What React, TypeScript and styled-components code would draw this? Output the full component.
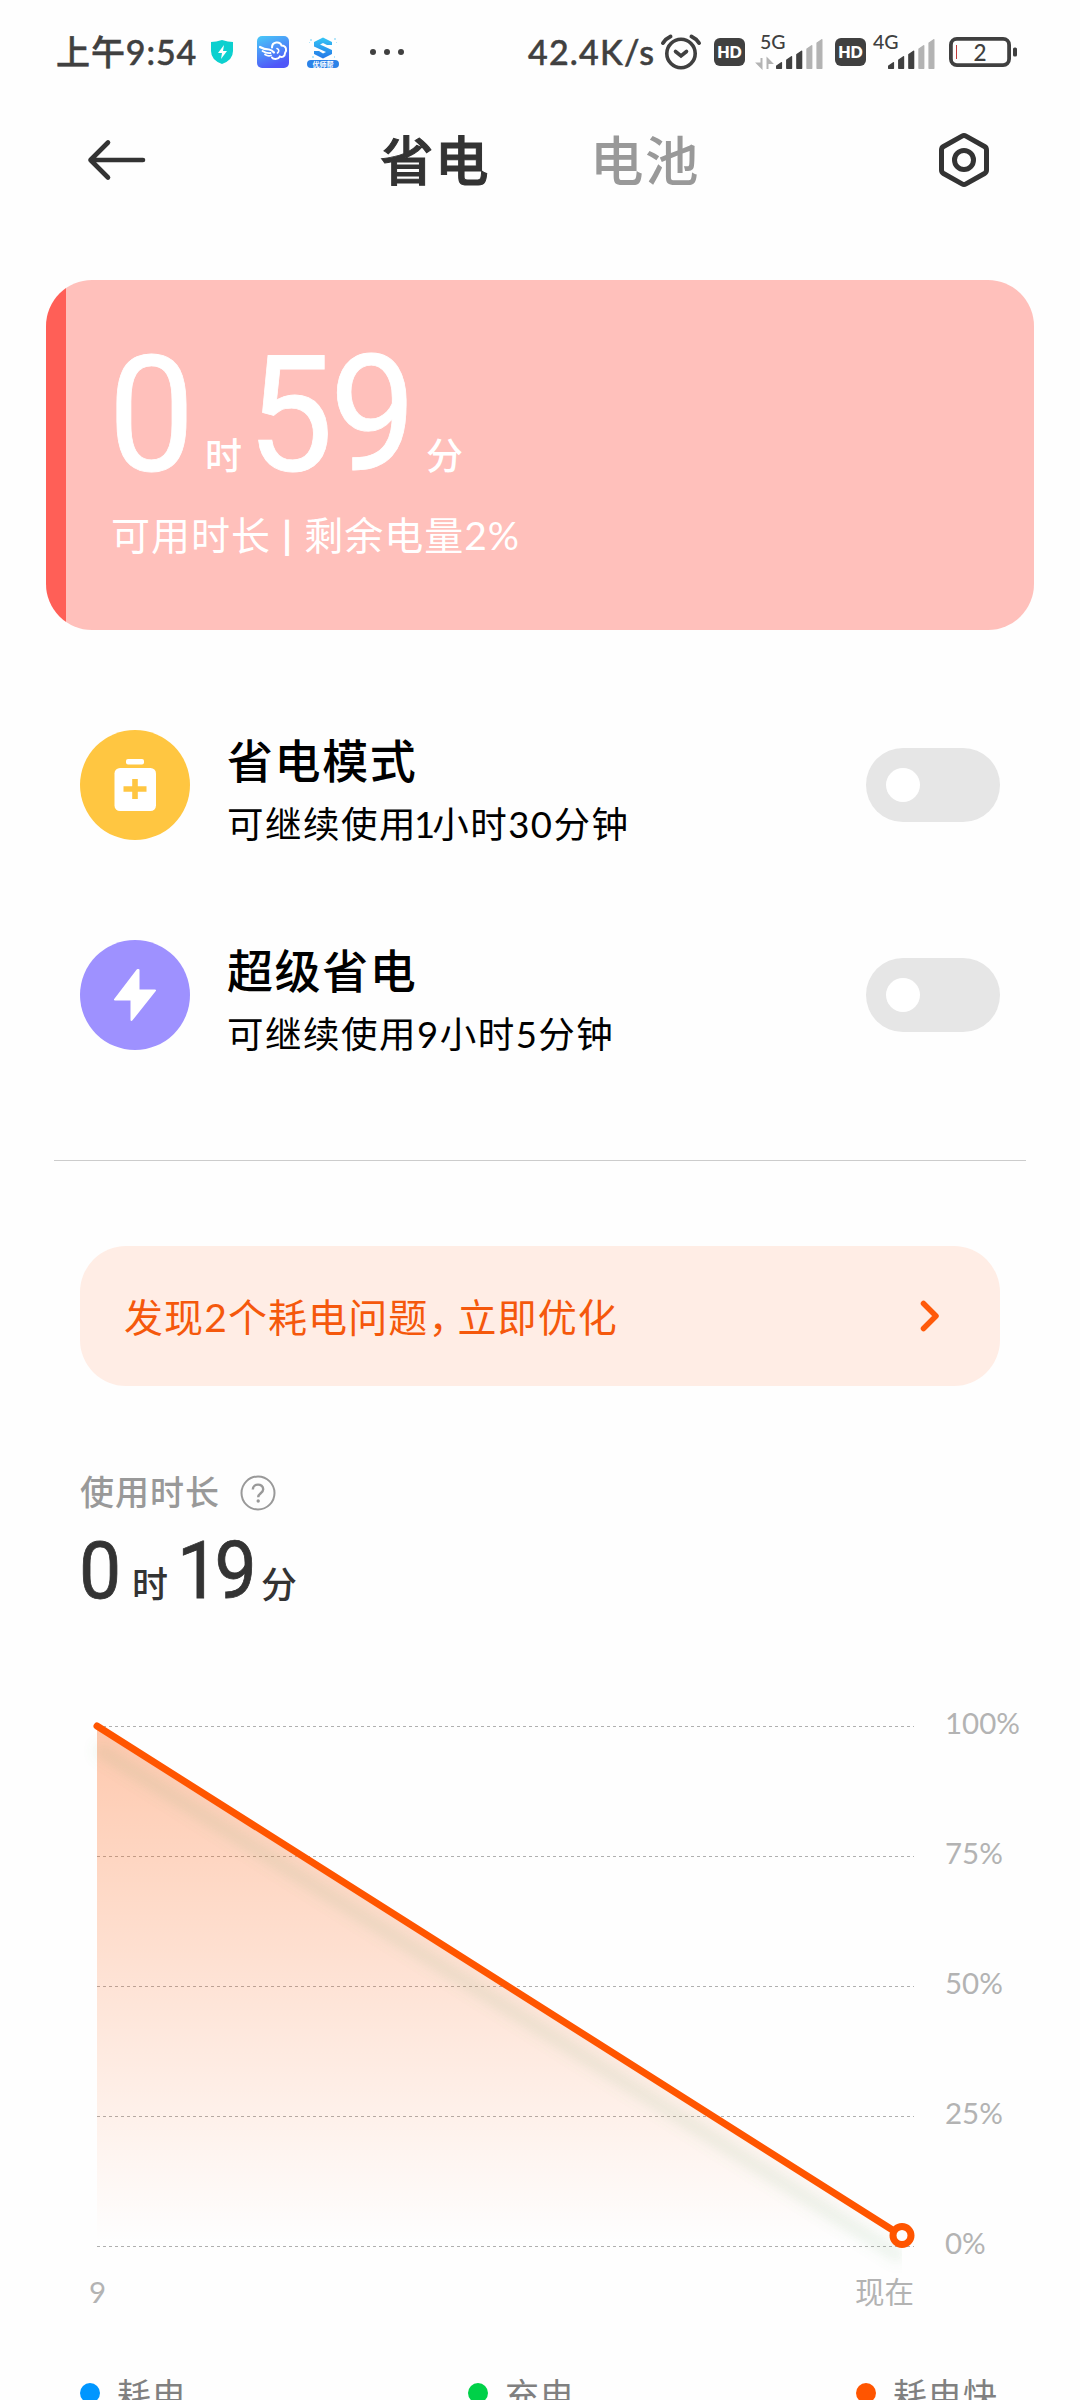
import React from "react";
import styled, { createGlobalStyle } from "styled-components";

const GlobalStyle = createGlobalStyle`
  html, body { margin: 0; padding: 0; background: #fefefe; }
  body { font-family: Lato, "Noto Sans CJK SC", sans-serif; color: #333; }
  svg { display: block; flex: none; overflow: visible; }
`;

const Screen = styled.main`
  width: 1080px;
  height: 2400px;
  overflow: hidden;
  display: flex;
  flex-direction: column;
  & > * { flex: none; box-sizing: border-box; }
`;

const StatusBar = styled.header`
  height: 104px;
  padding: 0 63px 0 56px;
  display: flex;
  align-items: center;
  justify-content: space-between;
  color: #404040;
`;

const StatusGroup = styled.div`
  display: flex;
  align-items: center;
`;

const StatusText = styled.span<{ $width: number; $spacing?: number }>`
  width: ${(p) => p.$width}px;
  font-size: 34px;
  line-height: 50px;
  font-weight: 500;
  letter-spacing: ${(p) => p.$spacing ?? 0}px;
  -webkit-text-stroke: 0.5px #404040;
  white-space: nowrap;
`;

const Gap = styled.i<{ $w: number }>`
  width: ${(p) => p.$w}px;
  flex: none;
`;

const NavBar = styled.nav`
  height: 176px;
  padding: 18px 91px 82px 88px;
  display: flex;
  align-items: center;
  justify-content: space-between;
`;

const Tabs = styled.div`
  display: flex;
  gap: 100px;
  margin-right: 5px;
`;

const Tab = styled.span<{ $active?: boolean }>`
  font-size: 53.5px;
  line-height: 76px;
  font-weight: 500;
  letter-spacing: 1.5px;
  color: ${(p) => (p.$active ? "#333" : "#999")};
  -webkit-text-stroke: ${(p) => (p.$active ? "1px #333" : "0")};
`;

const BatteryCard = styled.section`
  height: 350px;
  margin: 0 46px;
  padding: 58px 0 0 65px;
  border-radius: 46px;
  color: #fff;
  background: linear-gradient(to right, #ff5f57 20px, #ffc0bb 20px);
`;

const BigTime = styled.div`
  display: flex;
  align-items: baseline;
  height: 169px;
  line-height: 154px;
`;

const Digits = styled.span<{ $size: number; $width: number; $spacing?: number; $shift?: number }>`
  width: ${(p) => p.$width}px;
  font-family: Roboto, sans-serif;
  font-size: ${(p) => p.$size}px;
  letter-spacing: ${(p) => p.$spacing ?? 0}px;
  text-indent: ${(p) => p.$shift ?? 0}px;
  transform: scaleX(0.95);
  transform-origin: left;
  -webkit-text-stroke: 0.8px currentColor;
  white-space: nowrap;
`;

const Unit = styled.span<{ $size: number; $width: number }>`
  width: ${(p) => p.$width}px;
  font-size: ${(p) => p.$size}px;
  font-weight: 500;
`;

const CardNote = styled.div`
  font-size: 39px;
  line-height: 56px;
  letter-spacing: 1px;
  white-space: pre;
`;

const Bar = styled.span`
  font-weight: 700;
`;

const ModeList = styled.section`
  display: flex;
  flex-direction: column;
  gap: 100px;
  padding: 100px 80px 0;
  height: 530px;
`;

const ModeRow = styled.div`
  display: flex;
  align-items: center;
  height: 110px;
`;

const ModeIcon = styled.div<{ $color: string }>`
  width: 110px;
  height: 110px;
  border-radius: 50%;
  background: ${(p) => p.$color};
`;

const ModeText = styled.div`
  flex: 1;
  padding: 10px 0 0 37px;
  color: #000;
  white-space: nowrap;
`;

const ModeTitle = styled.div`
  font-size: 46px;
  line-height: 64px;
  font-weight: 500;
  letter-spacing: 1.6px;
`;

const ModeNote = styled.div`
  font-size: 36.5px;
  line-height: 54px;
  letter-spacing: 1.5px;
  margin-top: 4px;
`;

const Narrow = styled.span<{ $by: number; $lead?: number }>`
  letter-spacing: ${(p) => -p.$by}px;
  margin-left: ${(p) => -(p.$lead ?? 0)}px;
`;

const Toggle = styled.div`
  box-sizing: border-box;
  width: 134px;
  height: 74px;
  padding: 20px;
  border-radius: 37px;
  background: #e6e6e6;
`;

const Knob = styled.div`
  width: 34px;
  height: 34px;
  border-radius: 50%;
  background: #fff;
`;

const Divider = styled.hr`
  width: 972px;
  height: 1px;
  margin: 0 54px 85px;
  border: 0;
  background: #ccc;
`;

const Notice = styled.section`
  height: 140px;
  margin: 0 80px;
  padding: 0 60px 0 44px;
  border-radius: 46px;
  display: flex;
  align-items: center;
  justify-content: space-between;
  background: #ffede5;
  color: #f5580c;
  font-size: 39px;
  letter-spacing: 1.1px;
`;

const NoticeText = styled.span`
  padding-bottom: 3px;
`;

const Usage = styled.section`
  padding: 81px 0 0 80px;
  height: 259px;
`;

const UsageLabel = styled.div`
  display: flex;
  align-items: center;
  gap: 20px;
  height: 52px;
  font-size: 34px;
  line-height: 48px;
  letter-spacing: 1px;
  color: #999;
`;

const UsageName = styled.span`
  font-weight: 500;
  padding-bottom: 3px;
`;

const UsageTime = styled.div`
  display: flex;
  align-items: baseline;
  height: 90px;
  line-height: 104px;
`;

const ChartArea = styled.section`
  display: flex;
  height: 610px;
  padding-left: 97px;
`;

const AxisLabels = styled.div`
  display: flex;
  flex-direction: column;
  padding: 58px 0 0 30px;
`;

const AxisLabel = styled.span`
  flex: none;
  height: 130px;
  line-height: 40px;
  font-size: 29.5px;
  color: #b3b3b3;
`;

const TimeAxis = styled.div`
  display: flex;
  justify-content: space-between;
  padding: 16px 166px 0 89px;
  height: 112px;
  line-height: 42px;
  font-size: 29.5px;
  color: #b3b3b3;
`;

const Legend = styled.footer`
  display: grid;
  grid-template-columns: 388px 388px auto;
  margin-left: 80px;
`;

const LegendItem = styled.div<{ $color: string }>`
  display: flex;
  align-items: center;
  gap: 17px;
  height: 52px;
  font-size: 34px;
  letter-spacing: 1px;
  color: #808080;
  white-space: nowrap;
  &::before {
    content: "";
    width: 20px;
    height: 20px;
    border-radius: 50%;
    background: ${(p) => p.$color};
  }
`;

const ShieldIcon = () => (
  <svg width="24" height="26" viewBox="0 0 24 26">
    <path d="M12 1 Q6 3 1 3 V12 Q1 21 12 25 Q23 21 23 12 V3 Q18 3 12 1Z" fill="#0cd0cf" />
    <path d="M14 6 8 14h4l-1 6 6-8h-4z" fill="#fff" />
  </svg>
);

const CloudIcon = () => (
  <svg width="32" height="32" viewBox="0 0 32 32">
    <defs>
      <linearGradient id="cloud" x1="0" y1="0" x2=".4" y2="1">
        <stop stopColor="#48cbf8" />
        <stop offset="1" stopColor="#5057f8" />
      </linearGradient>
    </defs>
    <rect width="32" height="32" rx="5" fill="url(#cloud)" />
    <g fill="none" stroke="#fff" strokeLinecap="round">
      <path d="M3 11q4 2.500 9 2.500 3 .5 5 3" strokeWidth="2.200" />
      <path d="M5.500 15q4 2.500 8 2M8 18.500q3 2 6 1" strokeWidth="1.800" />
      <path d="M15 11.500c0-6 8-6.500 9.500-2 5 0 5.500 5 3.500 7.500 0 4-3.500 4.500-5 3.500-2 3.500-7 3-8 1" strokeWidth="2" />
      <path d="M20 12.500c2 .5 2.500 3 .5 4.500" strokeWidth="1.600" />
    </g>
  </svg>
);

const SBadgeIcon = () => (
  <svg width="32" height="32" viewBox="0 0 32 32">
    <defs>
      <linearGradient id="sbadge" x1="0" y1="0" x2="0" y2="1">
        <stop stopColor="#35c6f5" />
        <stop offset="1" stopColor="#2477e8" />
      </linearGradient>
    </defs>
    <path d="M16 1.500 25 6V9H20L16 7 13 8.500 25 14V18L16 22.500 7 18V15H12L16 17.500 19 16 7 10.500V6Z" fill="url(#sbadge)" />
    <path d="M3 3h2v2H3zM27 2h2v2h-2zM5 20h2v2H5zM27 20h1v2h-1zM2 6h1v1H2zM29 6h1v1h-1z" fill="#b5e6fa" />
    <rect x="0" y="24" width="32" height="8" rx="4" fill="#2b82e8" />
    <text x="16" y="30.500" fontSize="7" fontWeight="700" textAnchor="middle" fill="#fff">优师帮</text>
  </svg>
);

const DotsIcon = () => (
  <svg width="34" height="6" viewBox="0 0 34 6" fill="#404040">
    <circle cx="3" cy="3" r="3" />
    <circle cx="17" cy="3" r="3" />
    <circle cx="31" cy="3" r="3" />
  </svg>
);

const AlarmIcon = () => (
  <svg width="40" height="36" viewBox="0 0 40 36" fill="none" stroke="#404040" strokeLinecap="round">
    <circle cx="20" cy="19.500" r="14.200" strokeWidth="3.600" />
    <path d="M14.500 17.500l5.500 4.500 5.500-4.500" strokeWidth="3.600" />
    <path d="M2 9Q5 4.500 9.500 2.500M38 9Q35 4.500 30.500 2.500" strokeWidth="4" />
  </svg>
);

const HdIcon = () => (
  <svg width="31" height="28" viewBox="0 0 31 28">
    <rect width="31" height="28" rx="6" fill="#404040" />
    <text x="15.500" y="20" fontSize="16" fontWeight="800" textAnchor="middle" fill="#fff">HD</text>
  </svg>
);

const BARS = [7, 13, 18.5, 24, 30];

const SignalIcon = ({ label, shift, arrows }: { label: string; shift: number; arrows?: boolean }) => (
  <svg width={shift + 49} height="34" viewBox={`0 0 ${shift + 49} 34`}>
    <text x={arrows ? 3 : 0} y="14" fontSize="19.500" fontWeight="500" fill="#404040">{label}</text>
    {arrows && (
      <path d="M4.500 33V23M10.500 23v11M.500 28.500h4v4zM14.500 28h-4v-4z" stroke="#b3b3b3" strokeWidth="2" fill="#b3b3b3" />
    )}
    {BARS.map((h, i) => {
      const x = shift + i * 10.1;
      const ink = i < 3 ? "#404040" : "#b3b3b3";
      return (
        <path
          key={h}
          d={`M${x + 0.7} 33.3V${38 - h}L${x + 5.4} ${34.7 - h}V33.3Z`}
          fill={ink}
          stroke={ink}
          strokeWidth="1.400"
          strokeLinejoin="round"
        />
      );
    })}
  </svg>
);

const BatteryIcon = () => (
  <svg width="68" height="30" viewBox="0 0 68 30">
    <rect x="1.900" y="1.900" width="58.200" height="26.200" rx="6" fill="none" stroke="#404040" strokeWidth="3.800" />
    <rect x="64" y="10.500" width="4" height="9" rx="1.600" fill="#404040" />
    <path d="M7.500 8v14" stroke="#c23a3a" strokeWidth="1" />
    <text x="31" y="23.500" fontSize="22.500" fontWeight="500" textAnchor="middle" fill="#404040">2</text>
  </svg>
);

const BackIcon = () => (
  <svg width="58" height="42" viewBox="0 0 58 42" fill="none" stroke="#333" strokeWidth="4.600" strokeLinecap="round" strokeLinejoin="round">
    <path d="M20 3.500 2.500 21 20 38.500M2.500 21H55" />
  </svg>
);

const SettingsIcon = () => (
  <svg width="50" height="54" viewBox="0 0 50 54" fill="none" stroke="#333" strokeWidth="5" strokeLinejoin="round">
    <path d="M23 3.100Q25 2 27 3.100L45.500 13.500Q47.500 14.700 47.500 17V37Q47.500 39.300 45.500 40.500L27 50.900Q25 52 23 50.900L4.500 40.500Q2.500 39.300 2.500 37V17Q2.500 14.700 4.500 13.500Z" />
    <circle cx="25" cy="27" r="9.500" />
  </svg>
);

const SaverGlyph = () => (
  <svg width="110" height="110" viewBox="0 0 110 110">
    <rect x="46" y="29" width="18" height="5.500" rx="2" fill="#fff" />
    <rect x="34.500" y="38" width="41.500" height="43" rx="5.500" fill="#fff" />
    <path d="M55 49v20M43.500 59h23" stroke="#ffc641" strokeWidth="5.600" />
  </svg>
);

const BoltGlyph = () => (
  <svg width="110" height="110" viewBox="0 0 110 110">
    <path d="M57.500 30 35 59.500H51.500V80L75 50.500H58.500V30Z" fill="#fff" stroke="#fff" strokeWidth="2" strokeLinejoin="round" />
  </svg>
);

const ChevronIcon = () => (
  <svg width="20" height="32" viewBox="0 0 20 32" fill="none" stroke="#ff5a0a" strokeWidth="5.500" strokeLinecap="round" strokeLinejoin="round">
    <path d="M3.500 3.500 16 16 3.500 28.500" />
  </svg>
);

const HelpIcon = () => (
  <svg width="36" height="36" viewBox="0 0 36 36" fill="none" stroke="#999" strokeWidth="2">
    <circle cx="18" cy="18" r="16.500" />
    <path d="M12.800 14.500c0-6.600 10.400-6.400 10.400-.3 0 4-5 4-5 8" strokeWidth="2.400" />
    <circle cx="18.200" cy="26" r="1.700" fill="#999" stroke="none" />
  </svg>
);

const GRID = [0, 130, 260, 390, 520];

const Chart = () => (
  <svg width="818" height="610" viewBox="0 -81 818 610">
    <defs>
      <linearGradient id="area" gradientUnits="userSpaceOnUse" x1="0" y1="0" x2="0" y2="516">
        <stop stopColor="#ff5500" stopOpacity=".32" />
        <stop offset="1" stopColor="#ff5500" stopOpacity="0" />
      </linearGradient>
      <filter id="soft" filterUnits="userSpaceOnUse" x="-30" y="-30" width="835" height="620">
        <feGaussianBlur stdDeviation="6.500" />
      </filter>
    </defs>
    {GRID.map((y) => (
      <path key={y} d={`M0 ${y + 0.5}H817`} stroke="#b0b0b0" strokeDasharray="3 3" />
    ))}
    <path d="M0 0 805 510V520H0Z" fill="url(#area)" />
    <path d="M0 22 805 532" stroke="#70a870" strokeOpacity=".15" strokeWidth="12" filter="url(#soft)" />
    <path d="M0 0 805 510" stroke="#ff5500" strokeWidth="7" strokeLinecap="round" />
    <circle cx="805" cy="509.500" r="9" fill="#fefefe" stroke="#ff5500" strokeWidth="7" />
  </svg>
);

const MODES = [
  { title: "省电模式", note: <>可继续使用<Narrow $by={3} $lead={3}>1</Narrow>小时30分钟</>, color: "#ffc641", glyph: <SaverGlyph /> },
  { title: "超级省电", note: <>可继续使用9小时5分钟</>, color: "#9e91ff", glyph: <BoltGlyph /> },
];

export default function App() {
  return (
    <>
      <GlobalStyle />
      <Screen>
        <StatusBar>
          <StatusGroup>
            <StatusText $width={154} $spacing={0.9}>上午9:54</StatusText>
            <ShieldIcon />
            <Gap $w={23} />
            <CloudIcon />
            <Gap $w={18} />
            <SBadgeIcon />
            <Gap $w={31} />
            <DotsIcon />
          </StatusGroup>
          <StatusGroup>
            <StatusText $width={133} $spacing={1.2}>42.4K/s</StatusText>
            <AlarmIcon />
            <Gap $w={13} />
            <HdIcon />
            <Gap $w={12} />
            <SignalIcon label="5G" shift={19} arrows />
            <Gap $w={10} />
            <HdIcon />
            <Gap $w={7} />
            <SignalIcon label="4G" shift={15} />
            <Gap $w={12} />
            <BatteryIcon />
          </StatusGroup>
        </StatusBar>

        <NavBar>
          <BackIcon />
          <Tabs>
            <Tab $active>省电</Tab>
            <Tab>电池</Tab>
          </Tabs>
          <SettingsIcon />
        </NavBar>

        <BatteryCard>
          <BigTime>
            <Digits $size={162} $width={94} $shift={-3}>0</Digits>
            <Unit $size={37} $width={44}>时</Unit>
            <Digits $size={162} $width={177} $spacing={-4} $shift={-2}>59</Digits>
            <Unit $size={37} $width={40}>分</Unit>
          </BigTime>
          <CardNote>可用时长 <Bar>|</Bar> 剩余电量2%</CardNote>
        </BatteryCard>

        <ModeList>
          {MODES.map((m) => (
            <ModeRow key={m.title}>
              <ModeIcon $color={m.color}>{m.glyph}</ModeIcon>
              <ModeText>
                <ModeTitle>{m.title}</ModeTitle>
                <ModeNote>{m.note}</ModeNote>
              </ModeText>
              <Toggle>
                <Knob />
              </Toggle>
            </ModeRow>
          ))}
        </ModeList>

        <Divider />

        <Notice>
          <NoticeText>发现2个耗电问题<Narrow $by={10}>，</Narrow>立即优化</NoticeText>
          <ChevronIcon />
        </Notice>

        <Usage>
          <UsageLabel>
            <UsageName>使用时长</UsageName>
            <HelpIcon />
          </UsageLabel>
          <UsageTime>
            <Digits $size={79} $width={52} $shift={-1}>0</Digits>
            <Unit $size={36} $width={45}>时</Unit>
            <Digits $size={79} $width={84} $spacing={-5}>19</Digits>
            <Unit $size={36} $width={40}>分</Unit>
          </UsageTime>
        </Usage>

        <ChartArea>
          <Chart />
          <AxisLabels>
            <AxisLabel>100%</AxisLabel>
            <AxisLabel>75%</AxisLabel>
            <AxisLabel>50%</AxisLabel>
            <AxisLabel>25%</AxisLabel>
            <AxisLabel>0%</AxisLabel>
          </AxisLabels>
        </ChartArea>

        <TimeAxis>
          <span>9</span>
          <span>现在</span>
        </TimeAxis>

        <Legend>
          <LegendItem $color="#0096ff">耗电</LegendItem>
          <LegendItem $color="#00d148">充电</LegendItem>
          <LegendItem $color="#ff5500">耗电快</LegendItem>
        </Legend>
      </Screen>
    </>
  );
}
